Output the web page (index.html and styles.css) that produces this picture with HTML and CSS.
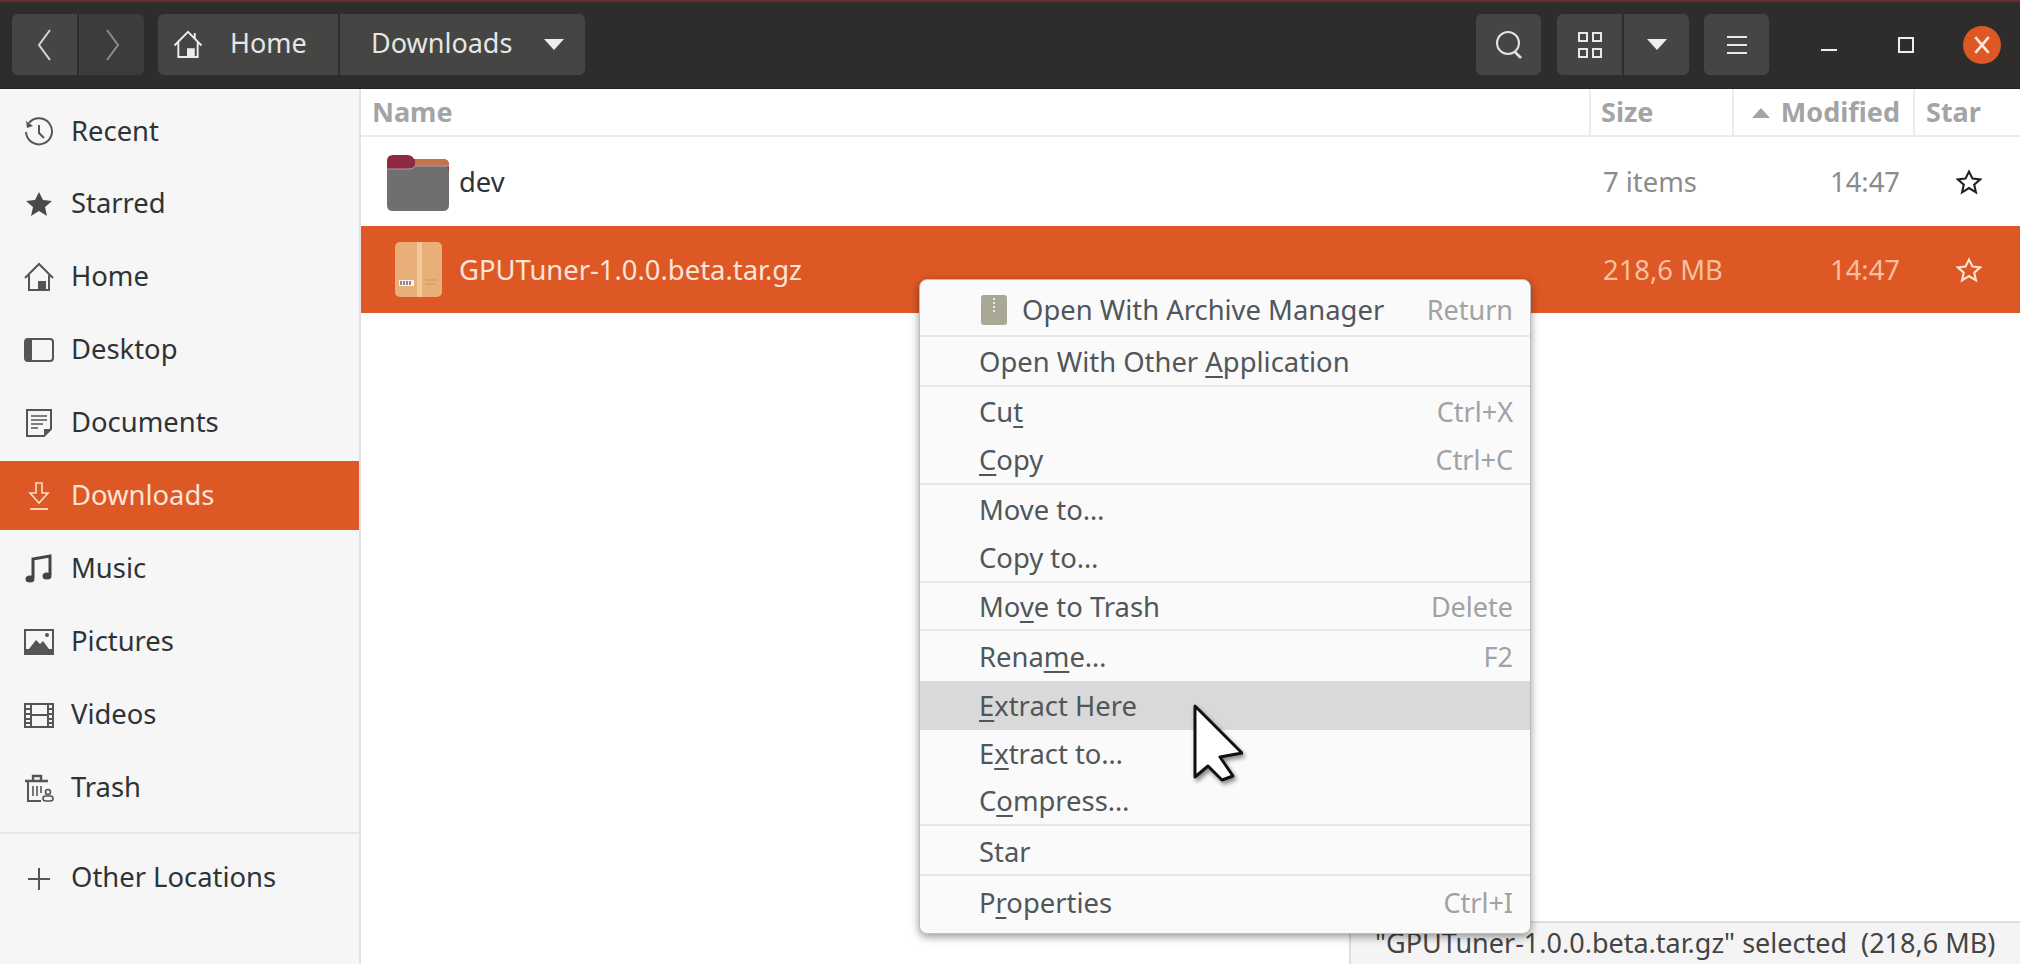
FILE: index.html
```html
<!DOCTYPE html>
<html lang="en">
<head>
    <meta charset="UTF-8">
    <title>Downloads</title>
    <link rel="stylesheet" href="styles.css">
</head>
<body>
<div class="window">

    <!-- header bar -->
    <header class="headerbar">
        <div class="btn-group nav-group">
            <div class="hbtn nav-btn"><svg width="20" height="34" viewBox="0 0 20 34"><path d="M15 2 L4 17 L15 32" fill="none" stroke="#d8d8d8" stroke-width="2"/></svg></div>
            <div class="hbtn nav-btn"><svg width="20" height="34" viewBox="0 0 20 34"><path d="M5 2 L16 17 L5 32" fill="none" stroke="#8c8c8c" stroke-width="2"/></svg></div>
        </div>
        <div class="btn-group path-group">
            <div class="hbtn path-home">
                <svg width="30" height="29" viewBox="0 0 30 30"><path d="M1 16 L15 2 L29 16 M5 13 V28 H25 V13 M15 28 V20 H21 V28 M22 8 V3" fill="none" stroke="#ececec" stroke-width="2"/><rect x="15" y="20" width="6" height="8" fill="#ececec"/></svg>
                <span>Home</span>
            </div>
            <div class="hbtn path-current">
                <span>Downloads</span>
                <i class="arrow-down"></i>
            </div>
        </div>
        <div class="spacer"></div>
        <div class="hbtn search-btn">
            <svg width="30" height="30" viewBox="0 0 30 30"><circle cx="14" cy="13" r="11" fill="none" stroke="#e4e4e4" stroke-width="2"/><path d="M21 22 L27 28" stroke="#e4e4e4" stroke-width="2.6"/></svg>
        </div>
        <div class="btn-group view-group">
            <div class="hbtn view-btn">
                <svg width="26" height="28" viewBox="0 0 26 28"><g fill="none" stroke="#e8e8e8" stroke-width="2"><rect x="2" y="2" width="8" height="8"/><rect x="16" y="2" width="8" height="8"/><rect x="2" y="18" width="8" height="8"/><rect x="16" y="18" width="8" height="8"/></g></svg>
            </div>
            <div class="hbtn view-arrow"><i class="arrow-down"></i></div>
        </div>
        <div class="hbtn menu-btn">
            <svg width="22" height="20" viewBox="0 0 22 20"><path d="M1 2 H21 M1 10 H21 M1 18 H21" stroke="#e8e8e8" stroke-width="2"/></svg>
        </div>
        <div class="win-controls">
            <i class="win-min"></i>
            <i class="win-max"></i>
            <div class="win-close"><svg width="18" height="20" viewBox="0 0 16 18"><path d="M2 2 L14 16 M14 2 L2 16" stroke="#f6e6de" stroke-width="2.4"/></svg></div>
        </div>
    </header>

    <div class="main">
        <!-- places sidebar -->
        <nav class="sidebar">
            <div class="place">
                <svg class="place-icon" width="30" height="30" viewBox="0 0 30 30"><path d="M5 6 A13 13 0 1 1 2 15" fill="none" stroke="#555" stroke-width="2"/><path d="M2 4 L3 11 L9 9 Z" fill="#555"/><path d="M15 8 V16 L20 21" fill="none" stroke="#555" stroke-width="2"/></svg>
                <span>Recent</span>
            </div>
            <div class="place">
                <svg class="place-icon" width="30" height="30" viewBox="0 0 30 30"><path d="M15 3 L19 11 L28 12 L21 18 L23 27 L15 22 L7 27 L9 18 L2 12 L11 11 Z" fill="#4a4a4a"/></svg>
                <span>Starred</span>
            </div>
            <div class="place">
                <svg class="place-icon" width="30" height="30" viewBox="0 0 30 30"><path d="M1 16 L15 2 L29 16 M5 13 V28 H25 V13 M15 28 V20 H21 V28" fill="none" stroke="#555" stroke-width="2"/><rect x="15" y="20" width="6" height="8" fill="#555"/></svg>
                <span>Home</span>
            </div>
            <div class="place">
                <svg class="place-icon" width="30" height="30" viewBox="0 0 30 30"><rect x="1" y="4" width="28" height="22" rx="3" fill="none" stroke="#555" stroke-width="2"/><path d="M2 5 H8 V25 H2 Z" fill="#555"/></svg>
                <span>Desktop</span>
            </div>
            <div class="place">
                <svg class="place-icon" width="30" height="30" viewBox="0 0 30 30"><path d="M3 2 H27 V21 L20 28 H3 Z" fill="none" stroke="#555" stroke-width="2"/><path d="M7 8 H23 M7 12 H23 M7 16 H19 M7 20 H14" stroke="#555" stroke-width="1.6"/><path d="M20 28 V21 H27 Z" fill="#555"/></svg>
                <span>Documents</span>
            </div>
            <div class="place place-active">
                <svg class="place-icon" width="30" height="30" viewBox="0 0 30 30"><path d="M12 2 H18 V12 H24 L15 22 L6 12 H12 Z" fill="none" stroke="#fbdccb" stroke-width="1.6"/><path d="M6 28 H24" stroke="#fbdccb" stroke-width="1.8"/></svg>
                <span>Downloads</span>
            </div>
            <div class="place">
                <svg class="place-icon" width="30" height="30" viewBox="0 0 30 30"><path d="M9 24 V5 L26 2 V21" fill="none" stroke="#444" stroke-width="3"/><ellipse cx="6" cy="25" rx="4.5" ry="3.5" fill="#444"/><ellipse cx="23" cy="22" rx="4.5" ry="3.5" fill="#444"/></svg>
                <span>Music</span>
            </div>
            <div class="place">
                <svg class="place-icon" width="30" height="30" viewBox="0 0 30 30"><rect x="1" y="3" width="28" height="24" fill="none" stroke="#555" stroke-width="2"/><path d="M1 22 H29 V27 H1 Z" fill="#555"/><path d="M5 22 L12 13 L16 17 L19 14 L25 22 Z" fill="#555"/><circle cx="23" cy="8" r="2" fill="#555"/></svg>
                <span>Pictures</span>
            </div>
            <div class="place">
                <svg class="place-icon" width="30" height="30" viewBox="0 0 30 30"><rect x="1" y="4" width="28" height="23" fill="none" stroke="#555" stroke-width="2"/><path d="M7 4 V27 M24 4 V27 M7 15 H24 M1 9 H7 M1 14 H7 M1 19 H7 M1 23 H7 M24 9 H29 M24 14 H29 M24 19 H29 M24 23 H29" stroke="#555" stroke-width="2"/></svg>
                <span>Videos</span>
            </div>
            <div class="place">
                <svg class="place-icon" width="30" height="30" viewBox="0 0 30 30"><path d="M1 8 H24 M9 7 V3 H17 V7" fill="none" stroke="#555" stroke-width="2.4"/><path d="M4 9 V28 H17" fill="none" stroke="#555" stroke-width="2"/><path d="M9 13 V23 M13 13 V23 M17 13 V20" stroke="#555" stroke-width="1.6"/><circle cx="24" cy="19" r="2.5" fill="none" stroke="#555" stroke-width="1.6"/><rect x="19" y="23" width="10" height="5" rx="2.5" fill="none" stroke="#555" stroke-width="1.6"/></svg>
                <span>Trash</span>
            </div>
            <div class="place-sep"></div>
            <div class="place">
                <svg class="place-icon" width="30" height="30" viewBox="0 0 30 30"><path d="M15 5 V27 M4 16 H26" stroke="#555" stroke-width="2"/></svg>
                <span>Other Locations</span>
            </div>
        </nav>

        <!-- file list -->
        <section class="files">
            <div class="file-head">
                <div class="col-name head-cell">Name</div>
                <div class="col-size head-cell">Size</div>
                <div class="col-mod head-cell"><i class="arrow-up"></i>Modified</div>
                <div class="col-star head-cell">Star</div>
            </div>
            <div class="file-row">
                <div class="col-name">
                    <div class="file-icon folder-icon">
                        <svg width="62" height="56" viewBox="0 0 62 56">
                            <path d="M0 6 Q0 0 6 0 H20 Q25 0 27 4 H56 Q62 4 62 10 V20 H0 Z" fill="#8e2b42"/>
                            <path d="M28 4 H56 Q62 4 62 10 V12 H28 Z" fill="#c4734f"/>
                            <path d="M0 14 H22 Q26 14 28 11 H56 Q62 11 62 17 V50 Q62 56 56 56 H6 Q0 56 0 50 Z" fill="#6f6f6f"/>
                            <path d="M0 14 H22 Q26 14 28 11 H62" fill="none" stroke="#b59aa0" stroke-width="1"/>
                        </svg>
                    </div>
                    <span class="file-name">dev</span>
                </div>
                <div class="col-size">7 items</div>
                <div class="col-mod">14:47</div>
                <div class="col-star"><svg width="26" height="26" viewBox="0 0 30 30"><path d="M15 3 L19 11 L28 12 L21 18 L23 27 L15 22 L7 27 L9 18 L2 12 L11 11 Z" fill="none" stroke="#222" stroke-width="2.4"/></svg></div>
            </div>
            <div class="file-row file-selected">
                <div class="col-name">
                    <div class="file-icon">
                        <svg width="47" height="55" viewBox="0 0 47 55">
                            <rect width="47" height="55" rx="5" fill="#e8b078"/>
                            <rect x="22" width="5" height="55" fill="#f0c89a"/>
                            <rect x="4" y="38" width="15" height="6" fill="#f8f4ee"/>
                            <path d="M6 39 V43 M9 39 V43 M12 39 V43 M15 39 V43" stroke="#444" stroke-width="1.2"/>
                            <path d="M30 38 H42 M30 42 H40" stroke="#cf9560" stroke-width="1"/>
                        </svg>
                    </div>
                    <span class="file-name">GPUTuner-1.0.0.beta.tar.gz</span>
                </div>
                <div class="col-size">218,6 MB</div>
                <div class="col-mod">14:47</div>
                <div class="col-star"><svg width="26" height="26" viewBox="0 0 30 30"><path d="M15 3 L19 11 L28 12 L21 18 L23 27 L15 22 L7 27 L9 18 L2 12 L11 11 Z" fill="none" stroke="#fbe4d8" stroke-width="2.4"/></svg></div>
            </div>
        </section>
    </div>

    <div class="statusbar">"GPUTuner-1.0.0.beta.tar.gz" selected  (218,6 MB)</div>

    <!-- context menu -->
    <div class="context-menu">
        <div class="menu-section sec-first">
            <div class="menu-item item-archive">
                <svg class="archive-icon" width="26" height="30" viewBox="0 0 26 30"><rect width="26" height="30" rx="3" fill="#a9a897"/><path d="M13 3 V18" stroke="#eeeee6" stroke-width="2" stroke-dasharray="2 2"/></svg>
                <span>Open With Archive Manager</span><em>Return</em>
            </div>
        </div>
        <div class="menu-section">
            <div class="menu-item"><span>Open With Other <u>A</u>pplication</span></div>
        </div>
        <div class="menu-section">
            <div class="menu-item"><span>Cu<u>t</u></span><em>Ctrl+X</em></div>
            <div class="menu-item"><span><u>C</u>opy</span><em>Ctrl+C</em></div>
        </div>
        <div class="menu-section">
            <div class="menu-item"><span>Move to…</span></div>
            <div class="menu-item"><span>Copy to…</span></div>
        </div>
        <div class="menu-section">
            <div class="menu-item item-trash"><span>Mo<u>v</u>e to Trash</span><em>Delete</em></div>
        </div>
        <div class="menu-section">
            <div class="menu-item item-rename"><span>Rena<u>m</u>e…</span><em>F2</em></div>
            <div class="menu-item item-hover"><span><u>E</u>xtract Here</span></div>
            <div class="menu-item item-short"><span>E<u>x</u>tract to…</span></div>
            <div class="menu-item item-short"><span>C<u>o</u>mpress…</span></div>
        </div>
        <div class="menu-section sec-star">
            <div class="menu-item"><span>Star</span></div>
        </div>
        <div class="menu-section sec-last">
            <div class="menu-item"><span>P<u>r</u>operties</span><em>Ctrl+I</em></div>
        </div>
    </div>

    <svg class="cursor" width="50" height="78" viewBox="-2 -2 50 78"><path d="M0 0 V71 L13 60 L27 74 L38 70 L25 51 L47 47 Z" fill="#fff" stroke="#111" stroke-width="3" stroke-linejoin="round"/></svg>
</div>
</body>
</html>
```

FILE: styles.css
```css
* {
    box-sizing: border-box;
}
html, body {
    margin: 0;
    height: 100%;
    overflow: hidden;
}
body {
    font-family: "Noto Sans", sans-serif;
    font-size: 27.4px;
    color: #2e3436;
    background-color: #fff;
}
.window {
    position: relative;
    width: 2020px;
    height: 964px;
    display: flex;
    flex-direction: column;
}

/* header bar */
.headerbar {
    height: 89px;
    flex: none;
    display: flex;
    align-items: center;
    padding: 0 0 1px 12px;
    font-size: 27px;
    background-color: #2e2d2b;
    border-top: 2px solid #6b2b2c;
    border-bottom: 1px solid #222;
    color: #e6e6e6;
}
.headerbar span {
    padding-bottom: 4px;
}
.spacer {
    flex: 1;
}
.btn-group {
    display: flex;
    gap: 2px;
}
.hbtn {
    height: 61px;
    display: flex;
    align-items: center;
    justify-content: center;
    background-color: #454543;
}
.btn-group .hbtn:first-child {
    border-radius: 6px 0 0 6px;
}
.btn-group .hbtn:last-child {
    border-radius: 0 6px 6px 0;
}
.nav-btn {
    width: 65px;
}
.nav-btn + .nav-btn {
    background-color: #3c3c3a;
}
.path-group {
    margin-left: 14px;
}
.path-home {
    width: 180px;
    justify-content: flex-start;
    padding-left: 15px;
    gap: 27px;
}
.path-current {
    width: 245px;
    justify-content: flex-start;
    padding-left: 31px;
}
.arrow-down {
    display: block;
    width: 0;
    height: 0;
    border-left: 10px solid transparent;
    border-right: 10px solid transparent;
    border-top: 11px solid #eee;
}
.path-current .arrow-down {
    margin-left: 32px;
}
.search-btn,
.menu-btn {
    width: 65px;
    border-radius: 6px;
}
.view-group {
    margin-left: 16px;
}
.view-btn {
    width: 65px;
}
.view-arrow {
    width: 65px;
}
.menu-btn {
    margin-left: 15px;
}
.win-controls {
    width: 251px;
    display: flex;
    align-items: center;
    padding-left: 52px;
}
.win-min {
    display: block;
    width: 16px;
    height: 2px;
    margin-top: 10px;
    background-color: #eee;
}
.win-max {
    display: block;
    width: 16px;
    height: 16px;
    margin-left: 61px;
    border: 2px solid #eee;
}
.win-close {
    width: 38px;
    height: 38px;
    margin-left: 49px;
    border-radius: 50%;
    display: flex;
    align-items: center;
    justify-content: center;
    background-color: #dd5824;
}

/* sidebar */
.main {
    flex: 1;
    display: flex;
    min-height: 0;
}
.sidebar {
    width: 361px;
    flex: none;
    padding-top: 8px;
    display: flex;
    flex-direction: column;
    gap: 3.9px;
    background-color: #f6f6f6;
    border-right: 2px solid #e2e2e2;
}
.place {
    height: 69px;
    flex: none;
    display: flex;
    align-items: center;
    gap: 17px;
    padding-left: 24px;
}
.place span {
    padding-bottom: 3px;
}
.place-icon {
    flex: none;
}
.place-active {
    background-color: #dd5824;
    color: #fbe4d8;
}
.place-sep {
    height: 2px;
    flex: none;
    margin: 6px 0 6px;
    background-color: #e6e6e6;
}

/* file list */
.files {
    flex: 1;
    min-width: 0;
}
.file-head,
.file-row {
    display: flex;
    align-items: center;
}
.file-head {
    height: 48px;
    border-bottom: 2px solid #ececec;
}
.col-name {
    flex: 1;
    min-width: 0;
    display: flex;
    align-items: center;
}
.col-size {
    width: 143px;
    flex: none;
    padding-left: 14px;
}
.col-mod {
    width: 181px;
    flex: none;
    text-align: right;
    padding-right: 13px;
}
.col-star {
    width: 107px;
    flex: none;
    display: flex;
    justify-content: center;
    padding-left: 5px;
}
.head-cell {
    height: 100%;
    align-items: center;
    line-height: 46px;
    font-weight: 700;
    font-size: 27px;
    color: #a2a4a5;
    border-left: 2px solid #ececec;
}
.file-head .col-size {
    padding-left: 10px;
}
.file-head .col-name {
    border-left: none;
    padding-left: 11px;
}
.file-head .col-star {
    justify-content: flex-start;
    padding-left: 11px;
}
.arrow-up {
    display: inline-block;
    width: 0;
    height: 0;
    margin-right: 11px;
    vertical-align: 4px;
    border-left: 9px solid transparent;
    border-right: 9px solid transparent;
    border-bottom: 10px solid #a2a4a5;
}
.file-row {
    height: 89px;
    color: #8a8c8d;
}
.file-row + .file-row {
    height: 87px;
}
.file-row .col-name {
    color: #2e3436;
}
.file-icon {
    width: 98px;
    flex: none;
    display: flex;
    justify-content: flex-end;
    padding-right: 10px;
}
.folder-icon {
    margin-top: 3px;
}
.file-row:last-child .file-icon {
    padding-right: 17px;
}
.file-selected {
    background-color: #dd5824;
    color: #f9bfa0;
}
.file-selected .col-name {
    color: #fbe4d8;
}

/* floating status */
.statusbar {
    position: absolute;
    right: 0;
    bottom: 0;
    width: 671px;
    height: 43px;
    padding-left: 24px;
    line-height: 40px;
    white-space: pre;
    font-size: 27px;
    color: #444;
    background-color: #f4f4f4;
    border-top: 2px solid #ddd;
    border-left: 2px solid #ddd;
}

/* context menu */
.context-menu {
    position: absolute;
    left: 919px;
    top: 279px;
    width: 612px;
    height: 655px;
    background-color: #fafafa;
    border: 1px solid #bdbdbd;
    border-radius: 8px;
    box-shadow: 0 3px 8px rgba(0, 0, 0, 0.4);
    color: #50565a;
}
.menu-section {
    border-bottom: 2px solid #e6e6e6;
}
.menu-section:last-child {
    border-bottom: none;
}
.menu-item {
    height: 48px;
    display: flex;
    align-items: center;
    justify-content: space-between;
    padding: 0 17px 0 59px;
    white-space: nowrap;
}
.sec-first .menu-item {
    height: 55px;
    justify-content: flex-start;
    padding-top: 4px;
}
.sec-star .menu-item {
    padding-top: 2px;
}
.sec-last .menu-item {
    height: 57px;
    padding-bottom: 5px;
}
.item-short {
    height: 47px;
}
.menu-item.item-trash {
    height: 46px;
}
.item-rename {
    height: 50px;
}
.item-archive em {
    margin-left: auto;
}
.archive-icon {
    margin: 0 15px 0 2px;
}
.menu-item em {
    font-style: normal;
    font-size: 27px;
    color: #a0a2a3;
}
.menu-item u {
    text-underline-offset: 4px;
    text-decoration-thickness: 2px;
}
.item-hover {
    height: 49px;
    background-color: #d9d9d9;
}

.cursor {
    position: absolute;
    left: 1193px;
    top: 704px;
    filter: drop-shadow(2px 3px 2px rgba(0, 0, 0, 0.45));
}
```
